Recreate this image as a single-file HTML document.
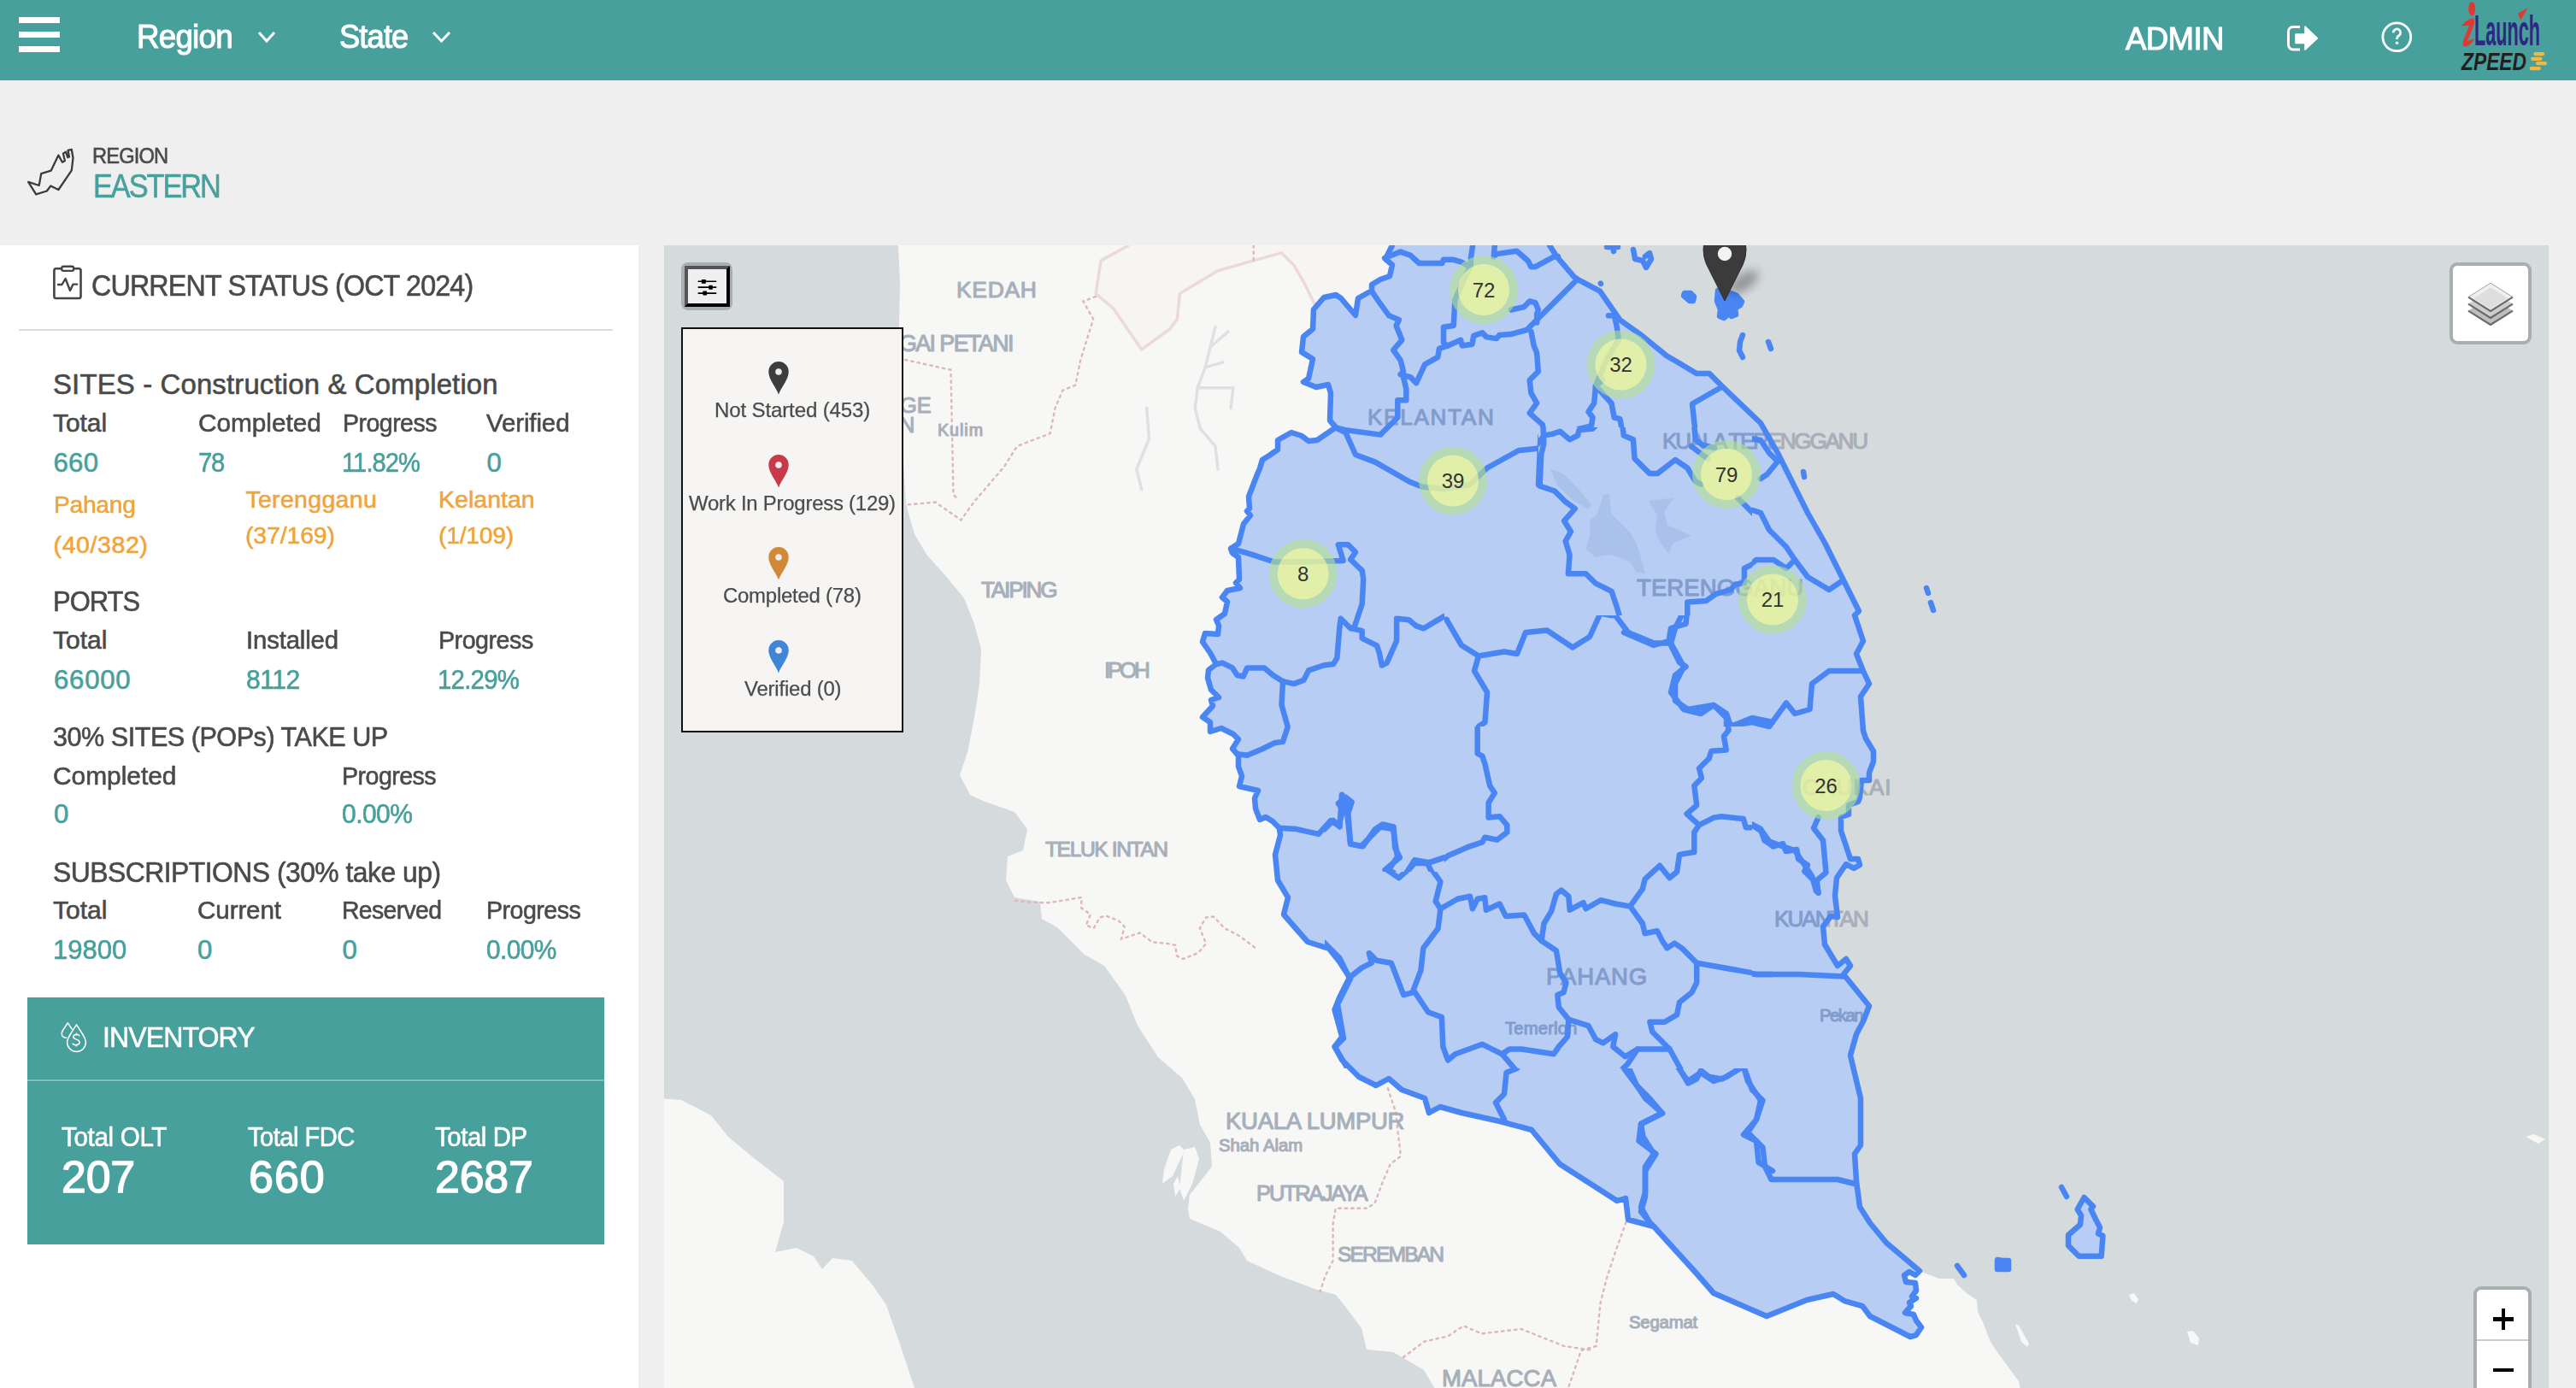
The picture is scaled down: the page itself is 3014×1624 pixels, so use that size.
<!DOCTYPE html><html><head><meta charset="utf-8"><style>
html,body{margin:0;padding:0}
body{width:3014px;height:1624px;position:relative;overflow:hidden;background:#efefef;font-family:"Liberation Sans",sans-serif}
.t{position:absolute;white-space:nowrap;line-height:1;-webkit-text-stroke:0.6px currentColor}
.abs{position:absolute}
</style></head><body>
<div class="abs" style="left:0;top:0;width:3014px;height:94px;background:#48a09c"></div>
<div class="abs" style="left:22px;top:20px;width:48px;height:6.5px;background:#fff"></div>
<div class="abs" style="left:22px;top:37px;width:48px;height:6.5px;background:#fff"></div>
<div class="abs" style="left:22px;top:54px;width:48px;height:6.5px;background:#fff"></div>
<div class="t" style="left:160.0px;top:23.9px;font-size:38.70px;letter-spacing:-0.84px;color:#fff;transform:scaleX(0.9512);transform-origin:0 0;-webkit-text-stroke:1.1px #fff;">Region</div>
<div class="t" style="left:397.0px;top:23.9px;font-size:38.70px;letter-spacing:-0.96px;color:#fff;transform:scaleX(0.9400);transform-origin:0 0;-webkit-text-stroke:1.1px #fff;">State</div>
<svg class="abs" style="left:0;top:0" width="600" height="94"><g fill="none" stroke="#fff" stroke-width="3"><polyline points="303,38 312,48 321,38"/><polyline points="507,38 516.5,48 526,38"/></g></svg>
<div class="t" style="left:2487.0px;top:26.9px;font-size:37.68px;letter-spacing:-0.62px;color:#fff;transform:scaleX(0.9705);transform-origin:0 0;-webkit-text-stroke:1.1px #fff;">ADMIN</div>
<svg class="abs" style="left:2660px;top:0" width="200" height="94">
<path d="M31,31.5 H23 a5.5,5.5 0 0 0 -5.5,5.5 V52.5 a5.5,5.5 0 0 0 5.5,5.5 H31" fill="none" stroke="#fff" stroke-width="3"/>
<path d="M26,40 H37 V31 L51.5,44.7 L37,58.2 V50.6 H26 Z" fill="#fff" stroke="#fff" stroke-width="1.5" stroke-linejoin="round"/>
<circle cx="144.3" cy="43.3" r="16.4" fill="none" stroke="#fff" stroke-width="2.8"/>
<path d="M140.3,38.2 a4.2,4.2 0 1 1 6.5,3.4 c-1.8,1.2 -2.4,2.3 -2.4,4.4" fill="none" stroke="#fff" stroke-width="2.6"/>
<circle cx="144.5" cy="50.2" r="1.7" fill="#fff"/>
</svg>
<svg class="abs" style="left:2860px;top:0" width="154" height="94">
<ellipse cx="32.2" cy="10.3" rx="4.1" ry="8.1" fill="#de3a33"/>
<path d="M20,30 C26,24 31,20 34,22 C36,24 35,28 33,33 L27,48 C30,47 33,46 35,45 C33,50 29,54 24,54.5 C21,54.5 21,51 23,45 L29,30 C26,30 23,30.5 20,30 Z" fill="#de3a33"/>
<text x="35" y="53" font-family="Liberation Sans" font-weight="bold" font-size="50" fill="#2d2980" textLength="77" lengthAdjust="spacingAndGlyphs">Launch</text>
<path d="M86,15.5 L97.5,9.5 L89,24 Z" fill="#de3a33"/>
<text x="20" y="82" font-family="Liberation Sans" font-weight="bold" font-style="italic" font-size="29" fill="#231f20" textLength="76" lengthAdjust="spacingAndGlyphs">ZPEED</text>
<g fill="#f5b73f"><rect x="104.3" y="61" width="13" height="4.2" rx="2.1"/><rect x="101" y="66.7" width="13.5" height="4.2" rx="2.1"/><rect x="107" y="72" width="13" height="4.2" rx="2.1"/><rect x="99.6" y="77.9" width="13.3" height="4.4" rx="2.2"/></g>
</svg>
<svg class="abs" style="left:0;top:150px" width="100" height="100"><path d="M33.1,62.9 L45.7,67 L48.2,53.1 L59.8,49.6 L68.4,31.6 L72.9,39.7 L75.9,38.2 L73.9,29.6 L77,27.6 L79.2,34.2 L81,33.4 L79.5,25.8 L83.8,24.8 L85.5,34.7 L83.8,49.3 L68.4,72 L59.3,67.5 L54.8,73.5 L42.2,77.3 Z" fill="none" stroke="#3c3c3c" stroke-width="2.3" stroke-linejoin="round"/></svg>
<div class="t" style="left:108.0px;top:170.4px;font-size:25.36px;letter-spacing:-0.94px;color:#4a4a4a;transform:scaleX(0.9340);transform-origin:0 0;">REGION</div>
<div class="t" style="left:109.0px;top:198.5px;font-size:38.26px;letter-spacing:-2.30px;color:#48a09c;transform:scaleX(0.8972);transform-origin:0 0;">EASTERN</div>
<div class="abs" style="left:0;top:287px;width:747px;height:1337px;background:#fff"></div>
<svg class="abs" style="left:50px;top:300px" width="60" height="60">
<rect x="13.4" y="14.3" width="31.1" height="34.7" rx="2.2" fill="none" stroke="#454545" stroke-width="2.6"/>
<rect x="22.3" y="11.7" width="13.8" height="5.2" rx="1.8" fill="#fff" stroke="#454545" stroke-width="2.4"/>
<polyline points="18,33 22.5,33 26.6,26 32,40 35.5,32.6 40.2,32.6" fill="none" stroke="#454545" stroke-width="2.4" stroke-linejoin="round" stroke-linecap="round"/>
</svg>
<div class="t" style="left:107.0px;top:316.9px;font-size:34.20px;letter-spacing:-0.85px;color:#4a4a4a;transform:scaleX(0.9419);transform-origin:0 0;">CURRENT STATUS (OCT 2024)</div>
<div class="abs" style="left:22px;top:385px;width:695px;height:2px;background:#dcdcdc"></div>
<div class="t" style="left:62.0px;top:434.0px;font-size:32.90px;letter-spacing:0.16px;color:#4a4a4a;">SITES - Construction &amp; Completion</div>
<div class="t" style="left:62.0px;top:479.6px;font-size:29.86px;letter-spacing:0.00px;color:#4a4a4a;">Total</div>
<div class="t" style="left:231.5px;top:479.6px;font-size:29.86px;letter-spacing:-0.03px;color:#4a4a4a;transform:scaleX(0.9979);transform-origin:0 0;">Completed</div>
<div class="t" style="left:401.0px;top:479.6px;font-size:29.86px;letter-spacing:-0.54px;color:#4a4a4a;transform:scaleX(0.9546);transform-origin:0 0;">Progress</div>
<div class="t" style="left:569.0px;top:479.6px;font-size:29.86px;letter-spacing:-0.12px;color:#4a4a4a;transform:scaleX(0.9879);transform-origin:0 0;">Verified</div>
<div class="t" style="left:62.6px;top:525.5px;font-size:31.16px;letter-spacing:0.20px;color:#48a09c;">660</div>
<div class="t" style="left:231.5px;top:525.5px;font-size:31.16px;letter-spacing:-1.49px;color:#48a09c;transform:scaleX(0.9400);transform-origin:0 0;">78</div>
<div class="t" style="left:400.0px;top:525.5px;font-size:31.16px;letter-spacing:-0.98px;color:#48a09c;transform:scaleX(0.9342);transform-origin:0 0;">11.82%</div>
<div class="t" style="left:569.4px;top:525.5px;font-size:31.16px;letter-spacing:0.00px;color:#48a09c;">0</div>
<div class="t" style="left:62.6px;top:575.7px;font-size:28.55px;letter-spacing:-0.21px;color:#f0a53a;transform:scaleX(0.9841);transform-origin:0 0;">Pahang</div>
<div class="t" style="left:62.6px;top:622.7px;font-size:28.55px;letter-spacing:0.56px;color:#f0a53a;">(40/382)</div>
<div class="t" style="left:287.4px;top:570.4px;font-size:28.55px;letter-spacing:0.29px;color:#f0a53a;">Terengganu</div>
<div class="t" style="left:287.4px;top:611.7px;font-size:28.55px;letter-spacing:-0.08px;color:#f0a53a;transform:scaleX(0.9921);transform-origin:0 0;">(37/169)</div>
<div class="t" style="left:513.0px;top:570.4px;font-size:28.55px;letter-spacing:0.00px;color:#f0a53a;">Kelantan</div>
<div class="t" style="left:513.0px;top:611.7px;font-size:28.55px;letter-spacing:-0.16px;color:#f0a53a;transform:scaleX(0.9840);transform-origin:0 0;">(1/109)</div>
<div class="t" style="left:62.2px;top:688.3px;font-size:32.61px;letter-spacing:-1.02px;color:#4a4a4a;transform:scaleX(0.9476);transform-origin:0 0;">PORTS</div>
<div class="t" style="left:62.0px;top:734.0px;font-size:30.00px;letter-spacing:0.00px;color:#4a4a4a;">Total</div>
<div class="t" style="left:287.7px;top:734.0px;font-size:30.00px;letter-spacing:-0.19px;color:#4a4a4a;transform:scaleX(0.9802);transform-origin:0 0;">Installed</div>
<div class="t" style="left:512.8px;top:734.0px;font-size:30.00px;letter-spacing:-0.53px;color:#4a4a4a;transform:scaleX(0.9560);transform-origin:0 0;">Progress</div>
<div class="t" style="left:63.0px;top:779.7px;font-size:31.16px;letter-spacing:0.75px;color:#48a09c;">66000</div>
<div class="t" style="left:287.7px;top:779.7px;font-size:31.16px;letter-spacing:-0.51px;color:#48a09c;transform:scaleX(0.9669);transform-origin:0 0;">8112</div>
<div class="t" style="left:511.8px;top:779.7px;font-size:31.16px;letter-spacing:-0.83px;color:#48a09c;transform:scaleX(0.9445);transform-origin:0 0;">12.29%</div>
<div class="t" style="left:62.0px;top:846.5px;font-size:31.88px;letter-spacing:-0.51px;color:#4a4a4a;transform:scaleX(0.9598);transform-origin:0 0;">30% SITES (POPs) TAKE UP</div>
<div class="t" style="left:62.0px;top:892.5px;font-size:30.00px;letter-spacing:-0.03px;color:#4a4a4a;transform:scaleX(0.9975);transform-origin:0 0;">Completed</div>
<div class="t" style="left:400.4px;top:892.5px;font-size:30.00px;letter-spacing:-0.56px;color:#4a4a4a;transform:scaleX(0.9530);transform-origin:0 0;">Progress</div>
<div class="t" style="left:63.0px;top:937.0px;font-size:31.16px;letter-spacing:0.00px;color:#48a09c;">0</div>
<div class="t" style="left:400.4px;top:937.0px;font-size:31.16px;letter-spacing:-0.56px;color:#48a09c;transform:scaleX(0.9636);transform-origin:0 0;">0.00%</div>
<div class="t" style="left:62.0px;top:1003.7px;font-size:33.33px;letter-spacing:-0.56px;color:#4a4a4a;transform:scaleX(0.9570);transform-origin:0 0;">SUBSCRIPTIONS (30% take up)</div>
<div class="t" style="left:62.0px;top:1049.7px;font-size:30.00px;letter-spacing:0.00px;color:#4a4a4a;">Total</div>
<div class="t" style="left:231.0px;top:1049.7px;font-size:30.00px;letter-spacing:-0.13px;color:#4a4a4a;transform:scaleX(0.9881);transform-origin:0 0;">Current</div>
<div class="t" style="left:400.4px;top:1049.7px;font-size:30.00px;letter-spacing:-0.69px;color:#4a4a4a;transform:scaleX(0.9466);transform-origin:0 0;">Reserved</div>
<div class="t" style="left:568.8px;top:1049.7px;font-size:30.00px;letter-spacing:-0.56px;color:#4a4a4a;transform:scaleX(0.9535);transform-origin:0 0;">Progress</div>
<div class="t" style="left:62.0px;top:1095.5px;font-size:31.16px;letter-spacing:-0.03px;color:#48a09c;transform:scaleX(0.9979);transform-origin:0 0;">19800</div>
<div class="t" style="left:231.0px;top:1095.5px;font-size:31.16px;letter-spacing:0.00px;color:#48a09c;">0</div>
<div class="t" style="left:400.4px;top:1095.5px;font-size:31.16px;letter-spacing:0.00px;color:#48a09c;">0</div>
<div class="t" style="left:568.8px;top:1095.5px;font-size:31.16px;letter-spacing:-0.63px;color:#48a09c;transform:scaleX(0.9596);transform-origin:0 0;">0.00%</div>
<div class="abs" style="left:32px;top:1167px;width:675px;height:289px;background:#48a09c"></div>
<div class="abs" style="left:32px;top:1263px;width:675px;height:2px;background:#7dc0bc"></div>
<svg class="abs" style="left:60px;top:1185px" width="50" height="50">
<path d="M24.3,12.2 a7.6,7.6 0 0 0 -5.9,16.9" fill="none"/>
<path d="M19.3,11.8 L13.8,20 C11,24.5 12,29 17.5,29.2 M19.3,11.8 L24.2,19" fill="none" stroke="#fff" stroke-width="1.5" stroke-linecap="round"/>
<path d="M29.5,13.8 L36.6,25 C39.4,29.5 40.4,32 40.4,34.5 A10.9,10.9 0 0 1 18.6,34.5 C18.6,32 19.6,29.5 22.4,25 Z" fill="none" stroke="#fff" stroke-width="1.5" stroke-linejoin="round"/>
<path d="M32.8,26.8 C31.5,24.8 25.8,24.6 25.8,28.2 C25.8,31.6 33.2,30.6 33.2,34.6 C33.2,38.2 26.8,38.4 25.1,36.2 M29.5,24.3 V26 M29.5,37.2 V39" fill="none" stroke="#fff" stroke-width="1.5" stroke-linecap="round"/>
</svg>
<div class="t" style="left:120.3px;top:1197.2px;font-size:33.91px;letter-spacing:-0.96px;color:#fff;transform:scaleX(0.9449);transform-origin:0 0;">INVENTORY</div>
<div class="t" style="left:72.2px;top:1314.6px;font-size:30.43px;letter-spacing:-0.32px;color:#fff;transform:scaleX(0.9714);transform-origin:0 0;">Total OLT</div>
<div class="t" style="left:290.0px;top:1314.6px;font-size:30.43px;letter-spacing:-0.52px;color:#fff;transform:scaleX(0.9559);transform-origin:0 0;">Total FDC</div>
<div class="t" style="left:509.0px;top:1314.6px;font-size:30.43px;letter-spacing:-0.42px;color:#fff;transform:scaleX(0.9635);transform-origin:0 0;">Total DP</div>
<div class="t" style="left:72.2px;top:1351.0px;font-size:52.00px;letter-spacing:-0.12px;color:#fff;transform:scaleX(0.9959);transform-origin:0 0;-webkit-text-stroke:1.4px #fff;">207</div>
<div class="t" style="left:291.0px;top:1351.0px;font-size:52.00px;letter-spacing:1.00px;color:#fff;-webkit-text-stroke:1.4px #fff;">660</div>
<div class="t" style="left:509.0px;top:1351.0px;font-size:52.00px;letter-spacing:-0.13px;color:#fff;transform:scaleX(0.9948);transform-origin:0 0;-webkit-text-stroke:1.4px #fff;">2687</div>
<svg class="abs" style="left:777px;top:287px" width="2205" height="1337" viewBox="777 287 2205 1337">
<rect x="777" y="287" width="2205" height="1337" fill="#d5dadd"/>
<polygon points="1050.0,270.0 1053.0,330.0 1052.0,380.0 1056.0,450.0 1057.0,540.0 1060.0,590.0 1070.0,625.0 1085.0,650.0 1105.0,672.0 1128.0,700.0 1140.0,730.0 1148.0,760.0 1146.0,800.0 1140.0,840.0 1132.0,880.0 1123.0,907.0 1135.0,930.0 1150.0,937.0 1187.0,950.0 1202.0,970.0 1197.0,995.0 1179.0,1002.0 1177.0,1030.0 1187.0,1050.0 1217.0,1055.0 1219.0,1075.0 1237.0,1085.0 1257.0,1105.0 1269.0,1117.0 1292.0,1130.0 1317.0,1165.0 1331.0,1200.0 1355.0,1237.0 1383.0,1261.0 1398.0,1286.0 1404.0,1316.0 1416.0,1337.0 1418.0,1365.0 1392.0,1398.0 1390.0,1414.0 1392.0,1426.0 1428.0,1441.0 1450.0,1460.0 1459.0,1475.0 1498.0,1493.0 1538.0,1508.0 1563.0,1515.0 1575.0,1530.0 1593.0,1554.0 1599.0,1579.0 1630.0,1582.0 1666.0,1603.0 1682.0,1630.0 2365.0,1630.0 2362.0,1616.0 2350.0,1600.0 2337.0,1582.0 2329.0,1570.0 2320.0,1547.0 2314.0,1535.0 2313.0,1521.0 2302.0,1514.0 2290.0,1503.0 2286.0,1496.0 2269.0,1496.0 2253.0,1490.0 2246.0,1487.0 2246.0,1487.0 2207.0,1454.0 2188.0,1431.0 2176.0,1412.0 2172.0,1382.0 2170.0,1350.0 2177.0,1340.0 2177.0,1285.0 2165.0,1235.0 2172.0,1210.0 2180.0,1195.0 2187.0,1177.0 2157.0,1140.0 2165.0,1130.0 2160.0,1122.0 2150.0,1130.0 2135.0,1105.0 2133.0,1084.0 2142.0,1072.0 2150.0,1073.0 2147.0,1048.0 2149.0,1027.0 2160.0,1011.0 2169.0,1016.0 2176.0,1012.0 2174.0,1005.0 2165.0,1005.0 2154.0,972.0 2154.0,956.0 2163.0,953.0 2163.0,942.0 2174.0,938.0 2176.0,933.0 2178.0,913.0 2187.0,913.0 2187.0,904.0 2192.0,891.0 2192.0,879.0 2183.0,864.0 2180.0,855.0 2177.0,815.0 2187.0,800.0 2180.0,785.0 2172.0,765.0 2180.0,750.0 2170.0,720.0 2175.0,715.0 2155.0,675.0 2135.0,635.0 2115.0,600.0 2095.0,560.0 2080.0,530.0 2060.0,495.0 2015.0,452.0 2000.0,437.0 1985.0,437.0 1965.0,425.0 1950.0,416.3 1919.0,391.1 1895.4,374.3 1872.0,340.7 1846.8,327.3 1841.7,323.9 1821.6,300.4 1813.0,287.0 1808.0,270.0" fill="#f7f7f6"/>
<polygon points="770.0,1285.0 797.0,1287.0 832.0,1305.0 852.0,1330.0 882.0,1355.0 917.0,1382.0 917.0,1430.0 907.0,1465.0 932.0,1460.0 952.0,1470.0 962.0,1485.0 974.0,1472.0 997.0,1475.0 1022.0,1505.0 1037.0,1527.0 1052.0,1570.0 1072.0,1630.0 770.0,1630.0" fill="#f7f7f6"/>
<polygon points="1370.0,1345.0 1380.0,1340.0 1386.0,1346.0 1372.0,1376.0 1360.0,1385.0 1362.0,1368.0" fill="#f7f7f6"/>
<polygon points="1373.0,1385.0 1378.0,1376.0 1381.0,1390.0 1375.0,1400.0" fill="#f7f7f6"/>
<polygon points="1385.0,1345.0 1398.0,1342.0 1403.0,1356.0 1395.0,1385.0 1385.0,1405.0 1380.0,1390.0" fill="#f7f7f6"/>
<polygon points="2491.0,1515.0 2497.0,1513.0 2502.0,1520.0 2500.0,1525.0 2494.0,1522.0" fill="#f7f7f6"/>
<polygon points="2559.0,1558.0 2566.0,1557.0 2573.0,1566.0 2572.0,1574.0 2563.0,1571.0" fill="#f7f7f6"/>
<polygon points="2358.0,1549.0 2362.0,1551.0 2374.0,1572.0 2372.0,1576.0 2365.0,1570.0" fill="#f7f7f6"/>
<polygon points="2955.0,1330.0 2965.0,1327.0 2978.0,1333.0 2970.0,1338.0" fill="#f7f7f6"/>
<polygon points="1320.8,280.0 1320.8,287.0 1288.1,304.9 1282.1,343.5 1303.0,361.4 1335.7,409.0 1368.5,385.2 1377.4,373.3 1380.4,343.5 1425.0,316.8 1466.7,304.9 1499.4,295.9 1514.3,310.8 1526.2,331.6 1540.0,360.0 1550.0,345.0 1563.0,345.0 1569.0,349.0 1586.0,369.0 1589.0,349.0 1605.0,340.0 1605.0,333.0 1615.0,327.0 1626.0,323.0 1629.0,310.0 1621.0,303.0 1629.0,287.0 1632.0,280.0" fill="#f7f1f2" opacity="0.5"/>
<polyline points="1320.8,287.0 1288.1,304.9 1282.1,343.5 1303.0,361.4 1335.7,409.0 1368.5,385.2 1377.4,373.3 1380.4,343.5 1425.0,316.8 1466.7,304.9 1499.4,295.9 1514.3,310.8 1526.2,331.6 1540.0,360.0" fill="none" stroke="#ecd9dc" stroke-width="3.5" stroke-linejoin="round"/>
<g fill="none" stroke="#dfb6bc" stroke-width="2.4" stroke-dasharray="2.5 5" stroke-linecap="round">
<polyline points="1282.0,347.0 1267.3,352.5 1279.2,373.3 1264.3,420.9 1258.3,450.7 1243.5,456.6 1234.5,477.5 1228.6,507.2 1189.9,522.1 1175.0,545.9 1139.3,587.6 1124.4,608.5 1094.6,587.6 1060.0,590.6"/>
<polyline points="1058.9,420.9 1112.5,432.8 1115.5,578.7 1121.4,584.7"/>
<polyline points="1466.7,287.0 1466.7,304.9"/>
<polyline points="1187.8,1053.6 1204.0,1055.4 1225.6,1056.3 1243.6,1053.6 1265.3,1050.0 1265.3,1062.6 1276.0,1069.8 1270.7,1082.4 1279.7,1086.0 1286.9,1073.4 1294.0,1071.6 1308.5,1077.0 1315.7,1084.2 1312.0,1098.6 1322.9,1095.0 1333.7,1091.4 1348.0,1102.2 1366.1,1104.0 1375.1,1105.8 1376.9,1118.4 1384.1,1122.0 1402.1,1114.8 1411.1,1104.0 1403.9,1086.0 1411.1,1073.4 1420.0,1072.5 1432.7,1086.0 1450.0,1095.0 1470.0,1110.0"/>
<polyline points="1623.8,1273.3 1633.0,1300.8 1636.0,1328.3 1639.0,1352.7 1626.8,1361.9 1617.7,1383.3 1608.5,1407.7 1599.3,1413.8 1562.7,1413.8 1559.6,1432.1 1559.6,1474.9 1550.5,1493.2 1544.4,1511.5"/>
<polyline points="1642.0,1588.0 1666.5,1569.6 1694.0,1563.5 1712.3,1551.3 1733.7,1560.4 1780.0,1555.0 1830.0,1575.0 1865.0,1580.0"/>
<polyline points="1902.5,1430.0 1890.0,1465.0 1880.0,1495.0 1872.5,1525.0 1867.5,1575.0 1850.0,1580.0 1835.0,1624.0"/>
</g>
<g fill="none" stroke="#dde1e4" stroke-width="3.5" stroke-linejoin="round" stroke-linecap="round">
<polyline points="1422.0,382.2 1416.1,406.0 1410.1,429.9 1401.2,453.7 1398.2,477.5 1404.2,501.3 1422.0,522.1 1425.0,549.0"/>
<polyline points="1416.1,406.0 1436.9,388.2"/>
<polyline points="1410.1,429.9 1431.0,423.9"/>
<polyline points="1401.2,453.7 1442.9,453.7 1440.0,477.5"/>
<polyline points="1341.7,477.5 1344.6,513.2 1329.8,549.0 1335.7,572.7"/>
</g>
<g font-family="Liberation Sans">
<text x="1119.0" y="348.4" font-size="26.4" letter-spacing="0.75" fill="#a7afba" stroke="#a7afba" stroke-width="1.1" stroke-linejoin="round">KEDAH</text>
<text x="1052.0" y="411.0" font-size="26.8" letter-spacing="-1.56" fill="#a7afba" stroke="#a7afba" stroke-width="1.1" stroke-linejoin="round">GAI PETANI</text>
<text x="1053.0" y="483.0" font-size="25.4" letter-spacing="0.00" fill="#a7afba" stroke="#a7afba" stroke-width="1.1" stroke-linejoin="round">GE</text>
<text x="1052.0" y="506.0" font-size="25.4" letter-spacing="0.00" fill="#a7afba" stroke="#a7afba" stroke-width="1.1" stroke-linejoin="round">N</text>
<text x="1097.0" y="510.0" font-size="19.6" letter-spacing="1.00" fill="#a7afba" stroke="#a7afba" stroke-width="1.1" stroke-linejoin="round">Kulim</text>
<text x="1148.0" y="699.0" font-size="26.1" letter-spacing="-2.17" fill="#a7afba" stroke="#a7afba" stroke-width="1.1" stroke-linejoin="round">TAIPING</text>
<text x="1292.0" y="793.0" font-size="26.1" letter-spacing="-3.33" fill="#a7afba" stroke="#a7afba" stroke-width="1.1" stroke-linejoin="round">IPOH</text>
<text x="1223.0" y="1002.0" font-size="24.6" letter-spacing="-1.40" fill="#a7afba" stroke="#a7afba" stroke-width="1.1" stroke-linejoin="round">TELUK INTAN</text>
<text x="1434.0" y="1321.0" font-size="27.5" letter-spacing="-0.27" fill="#a7afba" stroke="#a7afba" stroke-width="1.1" stroke-linejoin="round">KUALA LUMPUR</text>
<text x="1426.0" y="1347.0" font-size="20.3" letter-spacing="0.00" fill="#a7afba" stroke="#a7afba" stroke-width="1.1" stroke-linejoin="round">Shah Alam</text>
<text x="1470.0" y="1405.0" font-size="25.4" letter-spacing="-1.88" fill="#a7afba" stroke="#a7afba" stroke-width="1.1" stroke-linejoin="round">PUTRAJAYA</text>
<text x="1565.0" y="1476.0" font-size="24.6" letter-spacing="-1.86" fill="#a7afba" stroke="#a7afba" stroke-width="1.1" stroke-linejoin="round">SEREMBAN</text>
<text x="1687.0" y="1621.5" font-size="27.5" letter-spacing="0.17" fill="#a7afba" stroke="#a7afba" stroke-width="1.1" stroke-linejoin="round">MALACCA</text>
<text x="1906.0" y="1554.0" font-size="20.3" letter-spacing="-0.17" fill="#a7afba" stroke="#a7afba" stroke-width="1.1" stroke-linejoin="round">Segamat</text>
<text x="1600.0" y="497.0" font-size="26.1" letter-spacing="1.71" fill="#a7afba" stroke="#a7afba" stroke-width="1.1" stroke-linejoin="round">KELANTAN</text>
<text x="1945.0" y="525.0" font-size="26.1" letter-spacing="-2.27" fill="#a7afba" stroke="#a7afba" stroke-width="1.1" stroke-linejoin="round">KUALA TERENGGANU</text>
<text x="1915.0" y="697.0" font-size="27.5" letter-spacing="0.11" fill="#a7afba" stroke="#a7afba" stroke-width="1.1" stroke-linejoin="round">TERENGGANU</text>
<text x="1809.0" y="1152.0" font-size="27.5" letter-spacing="0.80" fill="#a7afba" stroke="#a7afba" stroke-width="1.1" stroke-linejoin="round">PAHANG</text>
<text x="1761.0" y="1210.0" font-size="20.3" letter-spacing="0.14" fill="#a7afba" stroke="#a7afba" stroke-width="1.1" stroke-linejoin="round">Temerloh</text>
<text x="2109.0" y="930.0" font-size="26.1" letter-spacing="1.00" fill="#a7afba" stroke="#a7afba" stroke-width="1.1" stroke-linejoin="round">CHUKAI</text>
<text x="2076.0" y="1084.0" font-size="26.1" letter-spacing="-2.00" fill="#a7afba" stroke="#a7afba" stroke-width="1.1" stroke-linejoin="round">KUANTAN</text>
<text x="2129.0" y="1195.0" font-size="20.3" letter-spacing="-1.50" fill="#a7afba" stroke="#a7afba" stroke-width="1.1" stroke-linejoin="round">Pekan</text>
</g>
<polygon points="1860.2,607.8 1868.1,603.0 1876.1,579.2 1882.4,577.7 1885.6,601.4 1895.1,610.9 1907.8,623.6 1914.1,634.7 1917.3,642.6 1925.2,671.2 1914.1,669.6 1907.8,658.5 1895.1,652.1 1882.4,649.0 1866.6,652.1 1855.5,642.6 1860.2,626.8" fill="#e2e5e8"/>
<polygon points="1930.0,585.6 1958.5,582.4 1947.4,598.3 1950.6,614.1 1979.1,626.8 1958.5,634.7 1952.1,647.4 1942.6,634.7 1936.3,620.4 1939.5,603.0 1930.0,588.7" fill="#e2e5e8"/>
<polygon points="1814.0,548.0 1830.0,555.0 1845.0,570.0 1862.0,590.0 1858.0,596.0 1840.0,585.0 1822.0,568.0" fill="#e2e5e8"/>
<polygon points="1808.0,270.0 1813.0,287.0 1821.6,300.4 1841.7,323.9 1846.8,327.3 1872.0,340.7 1895.4,374.3 1919.0,391.1 1950.0,416.3 1965.0,425.0 1985.0,437.0 2000.0,437.0 2015.0,452.0 2060.0,495.0 2080.0,530.0 2095.0,560.0 2115.0,600.0 2135.0,635.0 2155.0,675.0 2175.0,715.0 2170.0,720.0 2180.0,750.0 2172.0,765.0 2180.0,785.0 2187.0,800.0 2177.0,815.0 2180.0,855.0 2183.0,864.0 2192.0,879.0 2192.0,891.0 2187.0,904.0 2187.0,913.0 2178.0,913.0 2176.0,933.0 2174.0,938.0 2163.0,942.0 2163.0,953.0 2154.0,956.0 2154.0,972.0 2165.0,1005.0 2174.0,1005.0 2176.0,1012.0 2169.0,1016.0 2160.0,1011.0 2149.0,1027.0 2147.0,1048.0 2150.0,1073.0 2142.0,1072.0 2133.0,1084.0 2135.0,1105.0 2150.0,1130.0 2160.0,1122.0 2165.0,1130.0 2157.0,1140.0 2187.0,1177.0 2180.0,1195.0 2172.0,1210.0 2165.0,1235.0 2177.0,1285.0 2177.0,1340.0 2170.0,1350.0 2172.0,1382.0 2176.0,1412.0 2188.0,1431.0 2207.0,1454.0 2246.0,1487.0 2241.0,1492.0 2234.0,1488.0 2228.0,1492.0 2230.0,1500.0 2241.0,1501.0 2242.0,1510.0 2237.0,1517.0 2242.0,1519.0 2234.0,1524.0 2236.0,1528.0 2229.0,1536.0 2239.0,1538.0 2242.0,1545.0 2248.0,1553.0 2242.0,1562.0 2235.0,1564.0 2188.0,1540.0 2179.0,1528.0 2158.0,1522.0 2145.0,1514.0 2114.0,1521.0 2067.0,1540.0 2005.0,1513.0 1985.0,1490.0 1935.0,1435.0 1905.0,1427.0 1902.0,1402.0 1892.0,1405.0 1825.0,1362.0 1792.0,1322.0 1755.0,1312.0 1710.0,1302.0 1685.0,1295.0 1672.0,1302.0 1667.0,1285.0 1640.0,1275.0 1625.0,1262.0 1610.0,1270.0 1590.0,1260.0 1570.0,1240.0 1562.0,1225.0 1572.0,1215.0 1565.0,1175.0 1580.0,1145.0 1567.0,1125.0 1555.0,1110.0 1530.0,1102.0 1515.0,1085.0 1502.0,1070.0 1507.0,1050.0 1495.0,1030.0 1492.0,1000.0 1498.0,977.0 1497.0,969.0 1489.0,961.0 1481.0,956.0 1474.0,959.0 1469.0,946.0 1468.0,934.0 1472.0,925.0 1450.0,920.0 1453.0,908.0 1449.0,897.0 1449.0,884.0 1442.0,876.0 1449.0,865.0 1443.0,859.0 1429.0,852.0 1416.0,856.0 1416.0,845.0 1407.0,839.0 1419.0,826.0 1417.0,819.0 1426.0,816.0 1417.0,807.0 1413.0,793.0 1414.0,784.0 1423.0,777.0 1416.0,764.0 1407.0,751.0 1410.0,741.0 1425.0,742.0 1426.0,732.0 1423.0,725.0 1433.0,718.0 1436.0,704.0 1430.0,699.0 1436.0,691.0 1451.0,688.0 1446.0,682.0 1450.0,678.0 1449.0,652.0 1442.0,647.0 1440.0,642.0 1449.0,636.0 1455.0,613.0 1463.0,603.0 1459.0,598.0 1462.0,595.0 1461.0,581.0 1471.0,555.0 1474.0,548.0 1477.0,538.0 1485.0,533.0 1495.0,526.0 1495.0,515.0 1511.0,506.0 1523.0,510.0 1531.0,516.0 1541.0,515.0 1563.0,500.0 1556.0,492.0 1557.0,460.0 1554.0,450.0 1540.0,453.0 1525.0,447.0 1531.0,443.0 1536.0,420.0 1523.0,412.0 1525.0,394.0 1536.0,385.0 1537.0,362.0 1549.0,348.0 1563.0,345.0 1569.0,349.0 1586.0,369.0 1589.0,349.0 1605.0,340.0 1605.0,333.0 1615.0,327.0 1626.0,323.0 1629.0,310.0 1621.0,303.0 1629.0,287.0 1632.0,270.0" fill="#3677ef" fill-opacity="0.32" stroke="#4a86f3" stroke-width="6.5" stroke-linejoin="round"/>
<defs><clipPath id="cpo"><path d="M777,287 H2982 V1624 H777 Z M1550,850 H2050 V1250 H1550 Z M1800,500 H2050 V720 H1800 Z M1390,620 H1690 V1020 H1390 Z" clip-rule="evenodd"/></clipPath>
<clipPath id="cp0"><path d="M1550,850 H2050 V1250 H1550 Z M1550,850 H1690 V1020 H1550 Z " clip-rule="evenodd"/></clipPath>
<clipPath id="cp1"><path d="M1800,500 H2050 V720 H1800 Z " clip-rule="evenodd"/></clipPath>
<clipPath id="cp2"><path d="M1390,620 H1690 V1020 H1390 Z " clip-rule="evenodd"/></clipPath>
</defs>
<g fill="none" stroke="#4a86f3" stroke-width="6.5" stroke-linejoin="round" stroke-linecap="round">
<g clip-path="url(#cpo)">
<polyline points="1620.1,302.1 1638.6,294.6 1650.4,298.8 1660.4,308.0 1687.3,308.0 1689.0,303.8 1700.7,303.8 1709.1,306.3 1717.5,310.5"/>
<polyline points="1724.2,280.0 1720.9,302.1 1720.9,310.5 1717.5,317.2 1702.4,350.8 1700.7,381.0 1689.0,382.7 1689.0,401.2 1694.0,404.5 1709.1,397.8 1710.8,404.5 1722.5,402.8 1724.2,392.8 1734.3,389.4 1739.3,394.4 1751.1,396.1 1754.4,391.9 1767.9,391.1 1786.3,386.0 1798.1,374.3 1818.2,354.1 1845.1,327.3"/>
<polyline points="1749.4,280.0 1747.7,300.4 1751.1,297.1 1774.6,293.7 1788.0,305.5 1791.4,312.2 1796.4,312.2 1818.2,300.4 1823.0,300.0"/>
<polyline points="1767.9,362.5 1783.0,359.2 1789.7,352.5 1796.4,354.1 1799.8,362.5 1798.1,367.6 1798.1,377.6"/>
<polyline points="1791.4,387.7 1794.7,404.5 1798.1,412.9 1799.8,434.7 1789.7,444.8 1791.4,459.9 1798.1,471.7 1789.7,483.4 1804.8,496.9 1806.5,505.2 1809.8,525.0"/>
<polyline points="1806.5,505.2 1818.2,505.2 1838.4,508.6 1846.8,501.9 1861.9,498.5 1863.5,488.5 1858.5,481.7 1865.2,471.7 1866.9,451.5 1875.3,444.8"/>
<polyline points="1882.0,369.3 1889.0,369.3 1892.1,384.4 1893.8,397.8 1880.0,420.0 1866.9,451.5 1885.4,471.7 1888.7,488.5 1895.4,490.1 1898.8,508.6 1910.6,512.0 1920.0,540.0 1930.0,555.0 1960.0,540.0 1980.0,555.0"/>
<polyline points="1605.0,340.7 1611.8,350.8 1625.2,369.3 1636.9,374.3 1633.6,381.0 1640.3,397.8 1630.2,409.5 1638.6,421.3 1642.0,434.7 1638.6,438.1 1650.4,441.4 1657.1,448.2 1667.1,426.3 1682.3,417.9 1683.9,407.9 1694.0,404.5"/>
<polyline points="1642.0,441.4 1645.3,454.9 1645.3,468.3 1635.3,468.3 1635.3,488.5 1615.1,508.6 1574.4,503.1 1562.9,500.3"/>
<polyline points="1562.9,500.3 1574.4,506.0 1586.0,532.0 1609.0,540.6 1649.4,563.7 1663.8,569.4 1690.0,572.3 1720.0,567.0 1740.0,547.5 1777.0,527.0 1806.0,524.0"/>
<polyline points="1802.5,510.0 1800.0,567.5 1830.0,585.0 1835.0,605.0 1832.5,630.0 1835.0,672.5 1855.0,675.0 1885.0,690.0 1890.0,720.0 1905.0,740.0 1935.0,752.5 1955.0,752.5 1970.0,780.0 1960.0,800.0 1960.0,820.0 1975.0,830.0 2005.0,825.0 2020.0,835.0 2025.0,850.0 2050.0,840.0 2074.0,845.0"/>
<polyline points="1955.0,752.5 1960.0,735.0 1975.0,705.0 1980.0,697.5"/>
<polyline points="1730.0,767.5 1725.0,785.0 1740.0,810.0 1737.5,845.0 1730.0,850.0 1730.0,880.0 1740.0,910.0 1750.0,935.0 1760.0,974.0"/>
<polyline points="1580.0,720.0 1592.5,710.0 1592.5,670.0 1580.0,660.0"/>
<polyline points="2025.0,850.0 2015.0,870.0 2000.0,880.0 1990.0,910.0 1980.0,945.0 1985.0,974.0"/>
<polyline points="1692.5,725.0 1710.0,755.0 1730.0,767.5 1760.0,762.5 1775.0,765.0 1785.0,740.0 1810.0,737.5 1840.0,757.5 1860.0,745.0 1872.5,717.5 1885.0,720.0 1890.0,720.0"/>
<polyline points="1616.0,780.0 1630.0,740.0 1632.5,722.5 1650.0,730.0 1680.0,725.0 1692.5,725.0"/>
<polyline points="1580.0,720.0 1585.0,740.0 1600.0,750.0 1610.0,765.0 1616.0,780.0"/>
<polyline points="2015.0,452.5 1980.0,472.5 1985.0,520.0 1982.5,545.0 1990.0,560.0"/>
<polyline points="1900.0,507.5 1915.0,525.0 1935.0,552.5 1960.0,540.0 1982.5,552.5 1992.5,560.0"/>
<polyline points="2027.5,510.0 2045.0,512.5 2060.0,515.0 2070.0,530.0 2080.0,540.0 2067.5,555.0 2060.0,560.0"/>
<polyline points="2020.0,580.0 2045.0,595.0 2060.0,600.0 2070.0,620.0 2090.0,640.0 2100.0,655.0 2090.0,665.0 2075.0,655.0 2055.0,655.0 2042.5,665.0 2040.0,690.0 2015.0,695.0 2000.0,700.0 1975.0,705.0 1972.5,730.0 1955.0,735.0 1952.5,750.0 1935.0,755.0 1900.0,740.0"/>
<polyline points="2100.0,655.0 2115.0,675.0 2140.0,690.0 2155.0,680.0"/>
<polyline points="1952.5,750.0 1965.0,775.0 1972.5,780.0 1960.0,790.0 1955.0,810.0 1970.0,830.0 1990.0,835.0 2005.0,825.0 2020.0,840.0 2020.0,850.0 2025.0,857.5"/>
<polyline points="2020.0,850.0 2050.0,845.0 2070.0,850.0 2090.0,822.5 2100.0,835.0 2117.5,830.0 2120.0,800.0 2140.0,785.0 2177.5,785.0"/>
<polyline points="2025.0,857.5 2015.0,875.0 1995.0,885.0 1990.0,905.0 1982.5,920.0 1980.0,950.0 1985.0,974.0"/>
<polyline points="1495.0,972.5 1515.0,970.0 1545.0,975.0 1560.0,960.0 1567.5,967.5 1570.0,930.0"/>
<polyline points="1570.0,930.0 1575.0,940.0 1580.0,987.5 1592.5,990.0 1615.0,967.5 1630.0,970.0 1635.0,1002.5 1625.0,1017.5 1640.0,1027.5 1655.0,1010.0 1670.0,1010.0 1700.0,1000.0 1730.0,985.0 1745.0,980.0 1765.0,975.0 1760.0,960.0 1745.0,952.5 1747.5,930.0"/>
<polyline points="1670.0,1010.0 1680.0,1030.0 1685.0,1057.5 1682.5,1075.0 1675.0,1095.0 1665.0,1110.0 1665.0,1130.0 1657.5,1145.0 1655.0,1160.0 1670.0,1180.0 1687.5,1190.0 1690.0,1225.0 1695.0,1240.0 1730.0,1225.0 1760.0,1232.5 1775.0,1250.0 1762.5,1255.0 1760.0,1280.0 1750.0,1290.0 1760.0,1310.0"/>
<polyline points="1685.0,1057.5 1720.0,1050.0 1725.0,1060.0 1740.0,1065.0 1755.0,1062.5 1765.0,1070.0 1785.0,1070.0 1805.0,1095.0 1820.0,1107.5 1825.0,1130.0 1830.0,1150.0 1825.0,1175.0 1835.0,1195.0 1830.0,1215.0 1820.0,1230.0 1790.0,1230.0 1765.0,1232.5"/>
<polyline points="1580.0,1145.0 1605.0,1130.0 1602.5,1115.0 1615.0,1125.0 1630.0,1130.0 1640.0,1160.0 1655.0,1162.5"/>
<polyline points="1805.0,1095.0 1820.0,1055.0 1830.0,1045.0 1840.0,1060.0 1860.0,1052.5 1880.0,1055.0 1905.0,1060.0 1925.0,1030.0 1945.0,1015.0 1960.0,1020.0 1965.0,1000.0 1985.0,990.0 1985.0,970.0 2010.0,955.0 2040.0,960.0 2060.0,970.0 2074.0,990.0"/>
<polyline points="1905.0,1060.0 1920.0,1080.0 1940.0,1090.0 1955.0,1105.0 1970.0,1110.0 1985.0,1127.5 2055.0,1140.0 2074.0,1140.0"/>
<polyline points="1985.0,1127.5 1980.0,1155.0 1965.0,1180.0 1950.0,1192.5 1930.0,1200.0 1935.0,1212.5 1950.0,1225.0 1965.0,1250.0 1975.0,1267.5 1985.0,1262.5 1990.0,1252.5 2000.0,1260.0 2015.0,1262.5 2040.0,1247.5 2045.0,1265.0 2060.0,1287.5 2055.0,1310.0 2045.0,1325.0 2055.0,1335.0 2057.5,1360.0 2074.0,1370.0"/>
<polyline points="1835.0,1195.0 1860.0,1202.5 1880.0,1220.0 1892.5,1215.0 1895.0,1230.0 1910.0,1230.0 1900.0,1250.0 1915.0,1270.0 1925.0,1285.0 1945.0,1302.5 1920.0,1315.0 1922.5,1330.0 1935.0,1350.0 1925.0,1365.0 1925.0,1400.0 1920.0,1417.5 1930.0,1430.0"/>
<polyline points="1910.0,1230.0 1950.0,1227.5 1965.0,1250.0"/>
<polyline points="1985.0,930.0 1977.5,952.5 1985.0,960.0"/>
<polyline points="1982.5,930.0 1975.0,952.5 1987.5,965.0 2005.0,957.5 2040.0,960.0 2060.0,970.0 2065.0,982.5 2085.0,990.0 2100.0,995.0 2110.0,1010.0 2120.0,1025.0 2125.0,1042.5"/>
<polyline points="1987.5,965.0 1980.0,995.0 1962.5,1002.5 1957.5,1022.5 1947.5,1012.5 1930.0,1025.0 1920.0,1037.5 1905.0,1057.5 1920.0,1080.0 1935.0,1090.0 1950.0,1105.0 1960.0,1102.5 1980.0,1120.0 1985.0,1130.0 2055.0,1140.0 2105.0,1140.0 2157.5,1142.5"/>
<polyline points="1985.0,1130.0 1980.0,1160.0 1965.0,1175.0 1962.5,1190.0 1930.0,1197.5 1930.0,1212.5 1950.0,1230.0 1975.0,1265.0 1990.0,1255.0 2005.0,1265.0 2020.0,1260.0 2040.0,1247.5 2050.0,1275.0 2062.5,1287.5 2055.0,1310.0 2040.0,1327.5 2055.0,1335.0 2062.5,1342.5 2065.0,1365.0 2072.5,1380.0 2150.0,1380.0 2170.0,1385.0"/>
<polyline points="1950.0,1230.0 1920.0,1230.0 1905.0,1247.5 1915.0,1270.0 1930.0,1285.0 1945.0,1302.5 1920.0,1315.0 1917.5,1335.0 1937.5,1350.0 1925.0,1370.0 1925.0,1395.0 1920.0,1412.5 1930.0,1430.0 1935.0,1435.0"/>
<polyline points="2127.5,956.3 2122.0,969.0 2133.0,983.3 2136.5,1021.0 2125.7,1030.0 2127.5,1044.6"/>
<polyline points="2050.0,965.3 2060.8,972.5 2064.4,983.3 2075.2,990.5 2086.0,987.0 2089.6,996.0 2102.3,994.0 2104.0,1005.0 2115.0,1012.0 2111.3,1019.4 2124.0,1032.0 2127.5,1044.6"/>
</g>
<g clip-path="url(#cp0)">
<polyline points="1728.7,850.0 1728.7,881.7 1734.4,884.6 1737.3,893.2 1743.1,919.2 1748.8,927.8 1741.6,939.3 1741.6,956.6 1754.6,955.2 1763.3,965.3 1763.3,973.9 1751.7,982.6 1737.3,979.7 1734.4,985.4 1717.1,991.2 1694.1,1001.3 1685.4,1008.5 1671.0,1011.4 1659.5,1007.1 1648.0,1017.1 1636.5,1027.2 1622.0,1017.1 1636.5,999.9 1627.8,985.4 1630.7,968.2 1616.3,965.3 1593.2,988.3 1578.8,988.3 1573.1,945.1 1567.3,942.2 1578.8,936.5 1573.1,933.6 1565.9,942.2 1567.3,965.3 1555.8,959.5 1547.1,965.3"/>
<polyline points="1671.0,1011.4 1685.4,1031.6 1679.7,1054.6 1685.4,1063.3 1705.6,1051.7 1720.0,1048.8 1722.9,1063.3 1728.7,1051.7 1737.3,1050.3 1738.8,1064.7 1754.6,1057.5 1761.8,1071.9 1783.4,1070.5 1795.0,1092.1 1803.6,1100.7 1820.9,1112.2 1825.2,1138.2 1832.4,1149.7 1829.5,1161.2 1822.3,1164.1 1823.8,1178.5 1835.3,1192.9 1833.9,1213.1 1823.8,1224.6 1818.0,1233.3 1780.5,1227.5 1766.1,1227.5 1757.5,1233.3 1734.4,1221.8 1702.7,1233.3 1694.1,1240.5 1688.3,1224.6 1686.9,1190.1 1671.0,1184.3 1653.7,1158.4 1662.4,1135.3 1665.3,1109.4 1682.6,1086.3 1685.4,1063.3"/>
<polyline points="1803.6,1100.7 1806.5,1080.5 1815.1,1066.1 1820.9,1046.0 1826.7,1041.6 1835.3,1048.8 1836.7,1064.7 1852.6,1056.1 1855.5,1063.3 1872.8,1053.2 1890.1,1057.5 1907.3,1060.4 1921.8,1040.2 1924.6,1028.7 1941.9,1012.8 1953.5,1027.2 1962.1,1020.0 1965.0,999.9 1982.3,997.0 1982.3,973.9 1988.0,965.3 1973.6,952.3 1985.2,942.2 1982.3,919.2 1990.9,910.5 1988.0,899.0 1999.6,887.5 2002.4,878.8 2019.7,877.4 2016.9,861.5 2022.6,854.3 2021.2,847.1"/>
<polyline points="1988.0,965.3 2005.3,956.6 2014.0,955.2 2039.9,958.1 2042.8,968.2 2054.3,968.2"/>
<polyline points="1907.3,1060.4 1921.8,1080.5 1924.6,1092.1 1939.0,1089.2 1944.8,1100.7 1950.6,1109.4 1959.2,1103.6 1967.9,1109.4 1985.2,1126.7 2054.3,1139.0"/>
<polyline points="1985.2,1126.7 1985.2,1149.7 1979.4,1161.2 1965.0,1172.8 1962.1,1187.2 1947.7,1195.8 1930.4,1195.8 1933.3,1207.3 1953.5,1227.5 1967.9,1253.5"/>
<polyline points="1835.3,1192.9 1858.4,1200.1 1867.0,1216.0 1875.6,1220.3 1890.1,1210.2 1887.2,1224.6 1901.6,1236.2 1916.0,1227.5 1933.3,1227.5 1953.5,1227.5"/>
<polyline points="1916.0,1227.5 1904.5,1244.8 1895.8,1253.5"/>
<polyline points="1547.1,1100.7 1567.3,1120.9 1578.8,1143.9 1593.2,1132.4 1604.8,1126.7 1601.9,1115.1 1610.5,1123.8 1627.8,1126.7 1642.2,1164.1 1653.7,1161.2"/>
<polyline points="1578.8,1143.9 1567.3,1167.0 1561.5,1181.4 1570.2,1213.1 1561.5,1224.6 1578.8,1253.5"/>
<polyline points="1757.5,1233.3 1774.8,1253.5"/>
</g>
<g clip-path="url(#cp1)">
<polyline points="1798.4,567.4 1800.0,568.1 1819.0,574.5 1831.7,587.2 1842.8,595.1 1830.1,609.4 1838.0,622.0 1831.7,633.1 1836.5,649.0 1834.9,671.2 1855.5,671.2 1866.6,682.3 1885.6,691.8 1891.9,710.8 1895.1,721.9"/>
<polyline points="1898.3,498.4 1899.8,509.5 1910.9,514.3 1912.5,536.5 1920.4,544.4 1930.0,553.9 1939.5,553.9 1960.1,538.0 1974.3,547.5 1983.8,563.4 1990.2,566.6"/>
<polyline points="2050.4,660.1 2040.9,664.8 2040.9,682.3 2029.8,683.8 2025.0,690.2 2007.6,694.9 1996.5,702.9 1974.3,704.4 1974.3,721.9"/>
<polyline points="1798.4,520.6 1806.3,509.5 1815.8,507.9 1825.4,504.8 1836.5,514.3 1846.0,509.5 1847.5,503.2 1863.4,501.6 1866.6,498.4"/>
<polyline points="1805.5,498.4 1806.3,519.0 1803.2,531.7 1801.6,568.1"/>
<polyline points="1982.3,498.4 1983.8,514.3 1991.8,520.6 2006.0,523.8"/>
<polyline points="1979.1,522.2 1993.3,533.3 1998.1,536.5"/>
<polyline points="2033.0,582.4 2053.6,603.0"/>
</g>
<g clip-path="url(#cp2)">
<polyline points="1440.4,641.6 1464.9,648.8 1490.9,657.5 1525.4,657.5 1571.6,656.0 1565.8,637.3 1577.3,637.3 1586.0,646.0 1580.2,654.6 1593.7,667.6 1595.2,677.6 1593.7,706.5 1585.1,732.4 1582.2,735.3 1593.7,738.2 1593.7,746.8 1611.0,755.4 1613.9,764.1 1616.8,778.5 1622.6,775.6 1634.1,749.7 1634.1,723.7 1648.5,725.2 1657.1,732.4 1665.8,735.3 1680.2,726.6 1690.0,720.9"/>
<polyline points="1580.2,735.3 1568.7,723.7 1567.2,735.3 1564.4,769.9 1560.0,777.1 1548.5,778.5 1531.2,784.3 1525.4,795.8 1513.9,800.1 1501.0,797.2 1489.4,790.0 1479.3,781.4 1459.2,781.4 1454.8,791.5 1447.6,790.0 1441.9,781.4 1430.3,775.6 1423.1,777.0"/>
<polyline points="1501.0,797.2 1499.5,824.6 1506.7,850.5 1501.0,867.9 1490.9,869.3 1476.5,876.5 1459.2,883.7 1447.6,882.2"/>
<polyline points="1496.6,968.7 1516.8,970.1 1542.7,975.9 1557.1,960.0 1565.8,965.8 1571.6,948.5 1565.8,939.9 1574.4,932.7 1581.6,938.4 1577.3,951.4 1580.2,987.4 1594.6,990.3 1609.0,970.1 1617.7,964.4 1630.6,967.3 1632.1,991.8 1637.8,1003.3 1620.5,1017.7"/>
<polyline points="1646.5,1020.0 1655.1,1006.2 1672.4,1009.1 1690.0,1003.3"/>
</g>
<polyline points="2412.0,1389.0 2418.0,1400.0"/>
<polyline points="2290.0,1481.0 2298.0,1492.0"/>
<polyline points="1887.0,287.0 1888.0,294.0"/>
<polyline points="1880.0,289.0 1893.0,289.0"/>
<polyline points="1911.0,292.0 1913.0,303.0 1922.0,305.0 1926.0,313.0 1932.0,303.0 1930.0,296.0 1925.0,300.0"/>
<polyline points="1872.8,331.5 1873.0,332.0"/>
<polyline points="2039.0,392.0 2036.0,400.0 2035.0,410.0 2039.0,418.0"/>
<polyline points="2069.0,400.0 2072.0,408.0"/>
<polyline points="2110.0,552.0 2111.0,558.0"/>
<polyline points="2254.0,688.0 2256.0,694.0"/>
<polyline points="2259.0,705.0 2262.0,714.0"/>
</g>
<polygon points="2337.0,1474.0 2337.0,1485.0 2350.0,1485.0 2350.0,1475.0 2343.0,1475.0" fill="#4a86f3" stroke="#4a86f3" stroke-width="6.5" stroke-linejoin="round"/>
<polygon points="2010.0,340.0 2009.0,352.0 2013.0,362.0 2012.0,370.0 2017.0,372.0 2024.0,366.0 2026.0,370.0 2031.0,368.0 2030.0,361.0 2036.0,357.0 2038.0,353.0 2032.0,346.0 2025.0,343.0 2018.0,347.0" fill="#4a86f3" stroke="#4a86f3" stroke-width="6.5" stroke-linejoin="round"/>
<polygon points="1971.0,343.0 1978.0,343.0 1982.0,347.0 1981.0,352.0 1977.0,352.0 1970.0,346.0" fill="#4a86f3" stroke="#4a86f3" stroke-width="6.5" stroke-linejoin="round"/>
<polygon points="2438.5,1401.0 2449.0,1411.6 2446.4,1415.0 2452.5,1427.5 2457.0,1436.3 2455.0,1443.3 2460.4,1446.0 2458.7,1469.7 2432.3,1469.7 2420.0,1457.4 2420.0,1445.0 2434.0,1432.7 2435.0,1422.0 2430.6,1415.0" fill="#b8cdf5" stroke="#4a86f3" stroke-width="6.5" stroke-linejoin="round"/>
<circle cx="1736" cy="339" r="40" fill="rgb(181,226,140)" fill-opacity="0.6"/>
<circle cx="1736" cy="339" r="30" fill="rgb(255,253,159)" fill-opacity="0.6"/>
<text x="1736" y="347.5" text-anchor="middle" font-family="Liberation Sans" font-size="24" fill="#333">72</text>
<circle cx="1896.5" cy="426.5" r="40" fill="rgb(181,226,140)" fill-opacity="0.6"/>
<circle cx="1896.5" cy="426.5" r="30" fill="rgb(255,253,159)" fill-opacity="0.6"/>
<text x="1896.5" y="435.0" text-anchor="middle" font-family="Liberation Sans" font-size="24" fill="#333">32</text>
<circle cx="1700" cy="562.5" r="40" fill="rgb(181,226,140)" fill-opacity="0.6"/>
<circle cx="1700" cy="562.5" r="30" fill="rgb(255,253,159)" fill-opacity="0.6"/>
<text x="1700" y="571.0" text-anchor="middle" font-family="Liberation Sans" font-size="24" fill="#333">39</text>
<circle cx="1524.7" cy="671.2" r="40" fill="rgb(181,226,140)" fill-opacity="0.6"/>
<circle cx="1524.7" cy="671.2" r="30" fill="rgb(255,253,159)" fill-opacity="0.6"/>
<text x="1524.7" y="679.7" text-anchor="middle" font-family="Liberation Sans" font-size="24" fill="#333">8</text>
<circle cx="2020" cy="555" r="40" fill="rgb(181,226,140)" fill-opacity="0.6"/>
<circle cx="2020" cy="555" r="30" fill="rgb(255,253,159)" fill-opacity="0.6"/>
<text x="2020" y="563.5" text-anchor="middle" font-family="Liberation Sans" font-size="24" fill="#333">79</text>
<circle cx="2074" cy="701.5" r="40" fill="rgb(181,226,140)" fill-opacity="0.6"/>
<circle cx="2074" cy="701.5" r="30" fill="rgb(255,253,159)" fill-opacity="0.6"/>
<text x="2074" y="710.0" text-anchor="middle" font-family="Liberation Sans" font-size="24" fill="#333">21</text>
<circle cx="2136.5" cy="919" r="40" fill="rgb(181,226,140)" fill-opacity="0.6"/>
<circle cx="2136.5" cy="919" r="30" fill="rgb(255,253,159)" fill-opacity="0.6"/>
<text x="2136.5" y="927.5" text-anchor="middle" font-family="Liberation Sans" font-size="24" fill="#333">26</text>
<defs><filter id="blur6" x="-50%" y="-50%" width="200%" height="200%"><feGaussianBlur stdDeviation="6"/></filter></defs>
<ellipse cx="2040" cy="330" rx="20" ry="9" fill="#000" opacity="0.32" filter="url(#blur6)" transform="rotate(-35 2040 330)"/>
<path d="M2018,352 L1996.5,309 Q1993,301 1993,292 A25,25 0 0 1 2043,292 Q2043,301 2039.5,309 Z" fill="#3b3b3b" stroke="#2e2e2e" stroke-width="1"/>
<circle cx="2018" cy="297" r="8.2" fill="#f2f2f2"/>
</svg>
<div class="abs" style="left:797px;top:307px;width:60px;height:56px;border-radius:8px;background:#a9aeb1"></div>
<div class="abs" style="left:801px;top:311px;width:45px;height:40px;background:#efefef;border:4px solid;border-color:#555 #000 #000 #555"></div>
<svg class="abs" style="left:810px;top:320px" width="36" height="30"><g stroke="#000" stroke-width="1.6" stroke-linecap="round"><line x1="7.2" y1="9.3" x2="27.7" y2="9.3"/><line x1="7.2" y1="16.1" x2="27.7" y2="16.1"/><line x1="7.2" y1="23.1" x2="27.7" y2="23.1"/></g><g fill="#000"><rect x="10.8" y="7" width="5.2" height="4.8" rx="0.8"/><rect x="19.3" y="13.8" width="4.6" height="5" rx="0.8"/><rect x="12.3" y="20.6" width="4.8" height="5" rx="0.8"/></g></svg>
<div class="abs" style="left:797px;top:383px;width:256px;height:470px;background:#f6f5f4;border:2px solid #111"></div>
<svg class="abs" style="left:898px;top:421.9px" width="26" height="41" viewBox="-13 -1 26 41"><path d="M0,38.4 C-3,30 -11.75,21 -11.75,11.75 A11.75,11.75 0 0 1 11.75,11.75 C11.75,21 3,30 0,38.4 Z" fill="#3d3d3d"/><circle cx="0" cy="12" r="3.8" fill="#eee"/></svg>
<div class="t" style="left:836.4px;top:468.1px;font-size:24.60px;letter-spacing:-0.16px;color:#4b4b4b;transform:scaleX(0.9796);transform-origin:0 0;-webkit-text-stroke:0.25px #4b4b4b;">Not Started (453)</div>
<svg class="abs" style="left:898px;top:530.55px" width="26" height="41" viewBox="-13 -1 26 41"><path d="M0,38.4 C-3,30 -11.75,21 -11.75,11.75 A11.75,11.75 0 0 1 11.75,11.75 C11.75,21 3,30 0,38.4 Z" fill="#c83a4a"/><circle cx="0" cy="12" r="3.8" fill="#eee"/></svg>
<div class="t" style="left:806.4px;top:576.7px;font-size:24.60px;letter-spacing:-0.23px;color:#4b4b4b;transform:scaleX(0.9723);transform-origin:0 0;-webkit-text-stroke:0.25px #4b4b4b;">Work In Progress (129)</div>
<svg class="abs" style="left:898px;top:639.2px" width="26" height="41" viewBox="-13 -1 26 41"><path d="M0,38.4 C-3,30 -11.75,21 -11.75,11.75 A11.75,11.75 0 0 1 11.75,11.75 C11.75,21 3,30 0,38.4 Z" fill="#d08a35"/><circle cx="0" cy="12" r="3.8" fill="#eee"/></svg>
<div class="t" style="left:846.3px;top:685.3px;font-size:24.60px;letter-spacing:-0.24px;color:#4b4b4b;transform:scaleX(0.9730);transform-origin:0 0;-webkit-text-stroke:0.25px #4b4b4b;">Completed (78)</div>
<svg class="abs" style="left:898px;top:747.85px" width="26" height="41" viewBox="-13 -1 26 41"><path d="M0,38.4 C-3,30 -11.75,21 -11.75,11.75 A11.75,11.75 0 0 1 11.75,11.75 C11.75,21 3,30 0,38.4 Z" fill="#3f86d6"/><circle cx="0" cy="12" r="3.8" fill="#eee"/></svg>
<div class="t" style="left:870.7px;top:793.9px;font-size:24.60px;letter-spacing:-0.20px;color:#4b4b4b;transform:scaleX(0.9730);transform-origin:0 0;-webkit-text-stroke:0.25px #4b4b4b;">Verified (0)</div>
<div class="abs" style="left:2866px;top:307px;width:88px;height:88px;border:4px solid #a9aeb1;border-radius:9px;background:#fff"></div>
<svg class="abs" style="left:2886px;top:328px" width="56" height="56" viewBox="0 0 56 56">
<path d="M2,35.6 L28,19.2 L54,35.6 L28,52 Z" fill="#bebebe"/><polyline points="2,35.6 28,52 54,35.6" fill="none" stroke="#6c6c6c" stroke-width="2.2" stroke-linejoin="round"/>
<path d="M2,27.6 L28,11.2 L54,27.6 L28,44 Z" fill="#cdcdcd"/><polyline points="2,27.6 28,44 54,27.6" fill="none" stroke="#6c6c6c" stroke-width="2.2" stroke-linejoin="round"/>
<path d="M2,19.6 L28,3.2 L54,19.6 L28,36 Z" fill="#f0f0f0" stroke="#8c8c8c" stroke-width="0.8"/><path d="M8,21 L28,8.2 L48,21 L28,33.5 Z" fill="#dedede"/><polyline points="2,19.6 28,36 54,19.6" fill="none" stroke="#6c6c6c" stroke-width="2.2" stroke-linejoin="round"/>
</svg>
<div class="abs" style="left:2894px;top:1505px;width:60px;height:130px;border:4px solid #a9aeb1;border-radius:9px;background:#fff"></div>
<div class="abs" style="left:2898px;top:1567px;width:60px;height:2px;background:#ccc"></div>
<div class="abs" style="left:2916.9px;top:1541px;width:24.2px;height:4.5px;background:#000"></div>
<div class="abs" style="left:2926.8px;top:1530.8px;width:4.4px;height:25px;background:#000"></div>
<div class="abs" style="left:2916.9px;top:1600.7px;width:24.2px;height:4.8px;background:#000"></div>
<div class="abs" style="left:2982px;top:94px;width:32px;height:1530px;background:#efefef"></div>
</body></html>
